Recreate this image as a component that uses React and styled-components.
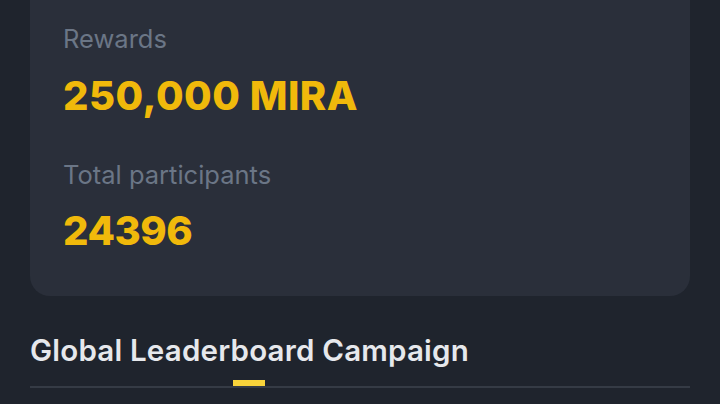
import styled, { createGlobalStyle } from "styled-components";

const Global = createGlobalStyle`
  html, body {
    margin: 0;
    padding: 0;
    background: #1f242d;
  }
  body {
    font-family: Inter, Lato, sans-serif;
  }
`;

const Page = styled.div`
  width: 720px;
  height: 404px;
  overflow: hidden;
  padding: 0 30px;
  box-sizing: border-box;
  display: flex;
  flex-direction: column;
`;

const StatsCard = styled.section`
  background: #2a2f3a;
  border-radius: 0 0 20px 20px;
  padding: 26px 33px 45px;
  display: flex;
  flex-direction: column;
`;

const Label = styled.div`
  font-size: 25.5px;
  line-height: 1;
  color: #6b7686;
  font-weight: 400;
  margin-top: ${({ $gap }) => $gap || 0}px;
`;

const Value = styled.div`
  font-size: 40px;
  line-height: 1;
  font-weight: 800;
  letter-spacing: ${({ $spacing }) => $spacing ?? 0.5}px;
  color: #f0b90b;
  margin-top: ${({ $gap }) => $gap || 0}px;
`;

const Title = styled.h2`
  margin: 40px 0 0;
  font-size: 29.5px;
  line-height: 1;
  font-weight: 600;
  letter-spacing: 0.2px;
  color: #e6e8ec;
`;

const TabBar = styled.div`
  margin-top: 14px;
  height: 6px;
  border-bottom: 2px solid #353b45;
  display: flex;
`;

const Indicator = styled.div`
  width: 32px;
  height: 6px;
  margin-left: 203px;
  background: #f8d33a;
`;

export default function App() {
  return (
    <>
      <Global />
      <Page>
        <StatsCard>
          <Label>Rewards</Label>
          <Value $gap={24}>250,000 MIRA</Value>
          <Label $gap={46}>Total participants</Label>
          <Value $gap={24} $spacing={-0.5}>24396</Value>
        </StatsCard>
        <Title>Global Leaderboard Campaign</Title>
        <TabBar>
          <Indicator />
        </TabBar>
      </Page>
    </>
  );
}
